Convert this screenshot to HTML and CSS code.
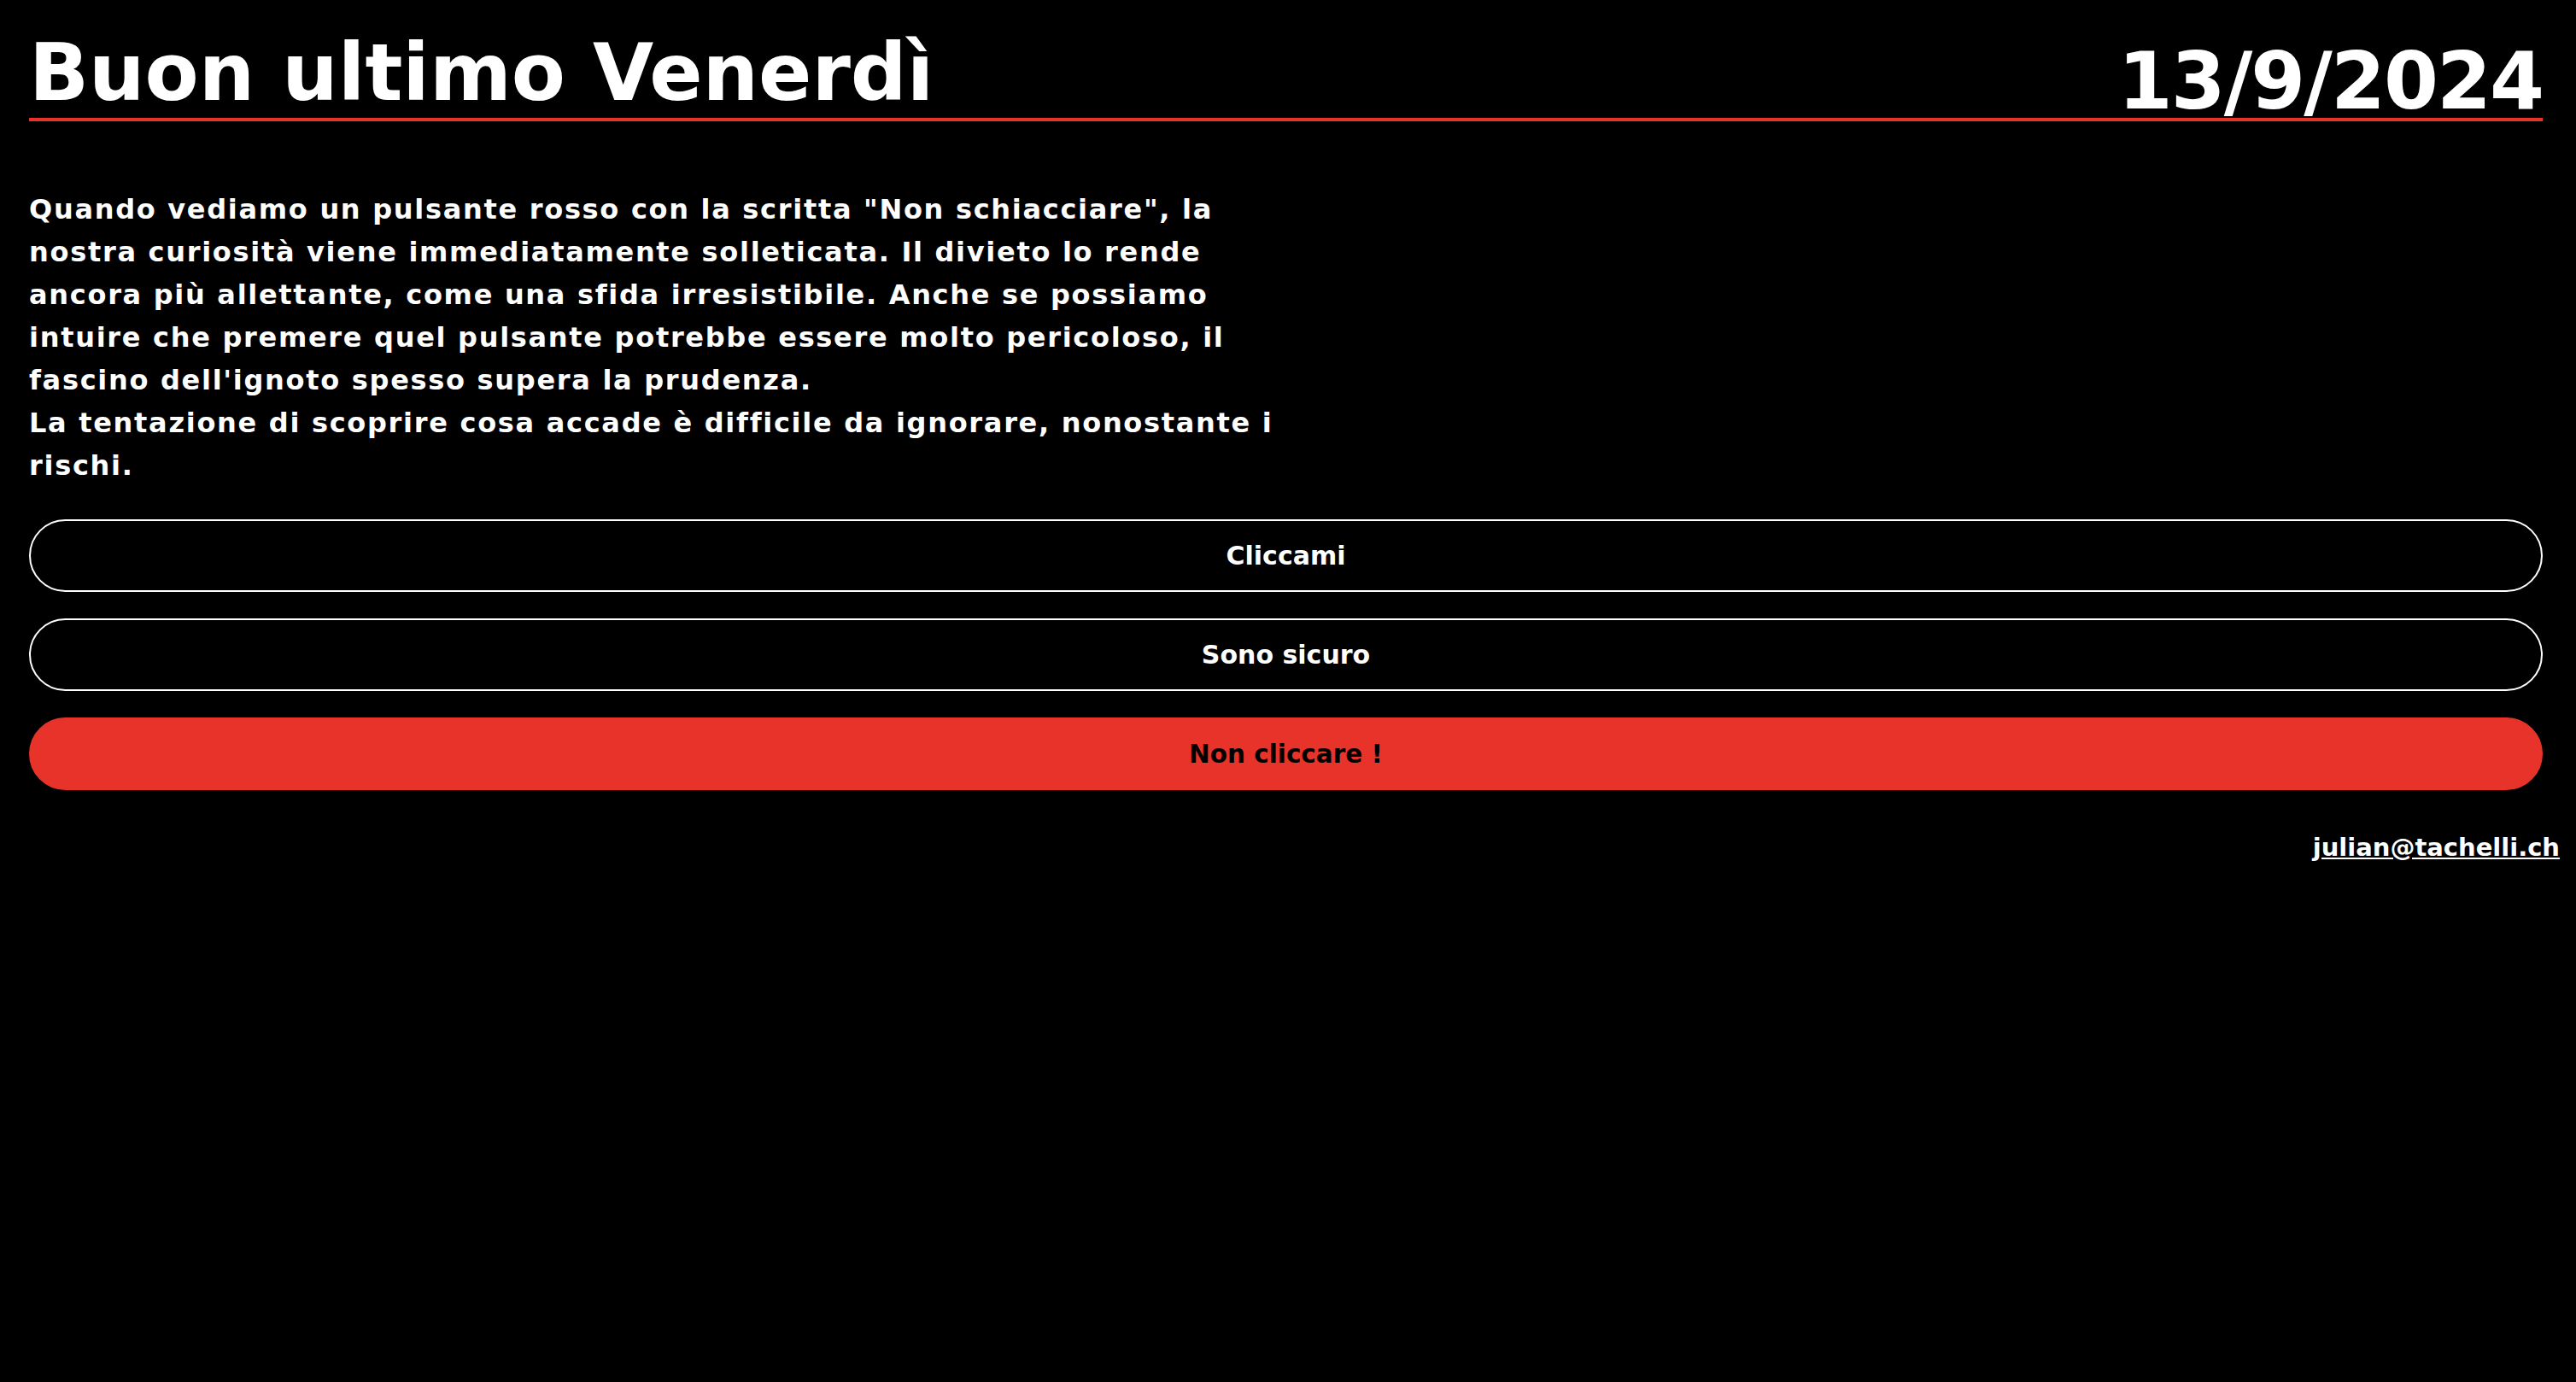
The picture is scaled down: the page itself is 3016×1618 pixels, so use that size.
FILE: index.html
```html
<!DOCTYPE html>
<html lang="it">
<head>
<meta charset="utf-8">
<title>Buon ultimo Venerdì</title>
<link rel="stylesheet" href="styles.css">
</head>
<body>
<main class="page">
  <header class="top">
    <h1 class="title">Buon ultimo Venerdì</h1>
    <div class="date">13/9/2024</div>
  </header>
  <p class="intro">Quando vediamo un pulsante rosso con la scritta "Non schiacciare", la nostra curiosità viene immediatamente solleticata. Il divieto lo rende ancora più allettante, come una sfida irresistibile. Anche se possiamo intuire che premere quel pulsante potrebbe essere molto pericoloso, il fascino dell'ignoto spesso supera la prudenza.<br>La tentazione di scoprire cosa accade è difficile da ignorare, nonostante i rischi.</p>
  <div class="actions">
    <button class="btn">Cliccami</button>
    <button class="btn">Sono sicuro</button>
    <button class="btn btn-danger">Non cliccare !</button>
  </div>
</main>
<footer class="foot">
  <a class="mail" href="mailto:julian@tachelli.ch">julian@tachelli.ch</a>
</footer>
</body>
</html>
```
FILE: styles.css
```css
html, body {
  margin: 0;
  padding: 0;
  background: #000;
  color: #fff;
  font-family: "DejaVu Sans", "Liberation Sans", sans-serif;
  font-weight: bold;
}

.page {
  padding: 40px 39px 0 34px;
}

.top {
  display: flex;
  justify-content: space-between;
  align-items: flex-end;
  border-bottom: 4px solid #e8332a;
}

.title {
  margin: 0;
  padding-bottom: 6px;
  font-size: 92px;
  line-height: 1;
  font-weight: bold;
}

.date {
  font-size: 92px;
  line-height: 0.9;
  letter-spacing: -2px;
}

.intro {
  width: 50%;
  margin: 78px 0 38px;
  font-size: 32px;
  line-height: 50px;
  letter-spacing: 1.7px;
}

.actions {
  display: flex;
  flex-direction: column;
  gap: 31px;
}

.btn {
  display: block;
  width: 100%;
  height: 85px;
  box-sizing: border-box;
  border: 2px solid #fff;
  border-radius: 999px;
  background: transparent;
  color: #fff;
  font-family: "DejaVu Sans", "Liberation Sans", sans-serif;
  font-weight: bold;
  font-size: 30px;
  cursor: pointer;
}

.btn-danger {
  background: #e8332a;
  border-color: #e8332a;
  color: #000;
  font-size: 29.5px;
}

.foot {
  margin-top: 50px;
  padding-right: 19px;
  text-align: right;
}

.mail {
  color: #fff;
  font-size: 29px;
  text-decoration: underline;
}
```
